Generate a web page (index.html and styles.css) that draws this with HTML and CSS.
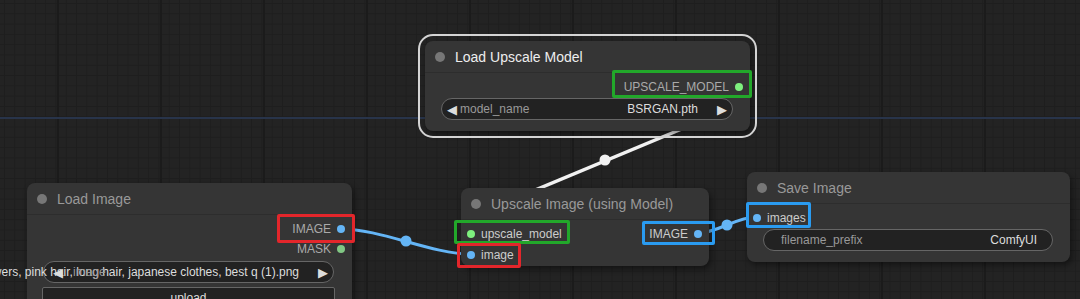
FILE: index.html
```html
<!DOCTYPE html>
<html lang="en">
<head>
    <meta charset="UTF-8">
    <meta name="viewport" content="width=device-width, initial-scale=1.0">
    <title>Upscale Workflow</title>
    <link rel="stylesheet" href="styles.css">
</head>
<body>

    <div class="canvas">
        <div class="guide"></div>

        <!-- Links between nodes -->
        <svg class="links" width="1080" height="299" viewBox="0 0 1080 299">
            <line x1="480" y1="213" x2="720" y2="113" stroke="#f2f2f2" stroke-width="3.5"/>
            <circle cx="605" cy="160" r="5.5" fill="#f2f2f2"/>
            <path d="M341 229 C 381 229, 431 254, 471 254" stroke="#64b5f6" stroke-width="3" fill="none"/>
            <circle cx="406" cy="241" r="5.5" fill="#64b5f6"/>
            <path d="M698 233 C 718 233, 736 217, 756 217" stroke="#64b5f6" stroke-width="3" fill="none"/>
            <circle cx="727" cy="225" r="5.5" fill="#64b5f6"/>
        </svg>

        <!-- Load Upscale Model -->
        <div class="node node-model selected">
            <div class="node-title"><span class="title-dot"></span>Load Upscale Model</div>
            <div class="node-body">
                <div class="slots">
                    <div class="slot-col"></div>
                    <div class="slot-col outputs">
                        <div class="slot out">UPSCALE_MODEL<span class="dot green"></span></div>
                    </div>
                </div>
                <div class="widget combo">
                    <span class="arrow">◀</span>
                    <span class="label">model_name</span>
                    <span class="value">BSRGAN.pth</span>
                    <span class="arrow right">▶</span>
                </div>
            </div>
        </div>

        <!-- Load Image -->
        <div class="node node-image">
            <div class="node-title"><span class="title-dot"></span>Load Image</div>
            <div class="node-body">
                <div class="slots">
                    <div class="slot-col"></div>
                    <div class="slot-col outputs">
                        <div class="slot out">IMAGE<span class="dot blue"></span></div>
                        <div class="slot out">MASK<span class="dot mask"></span></div>
                    </div>
                </div>
                <div class="widget combo overflow">
                    <span class="arrow">◀</span>
                    <span class="label">image</span>
                    <span class="value">1girl, cherry blossoms, flowers, pink hair, long hair, japanese clothes, best q (1).png</span>
                    <span class="arrow right">▶</span>
                </div>
                <div class="button">upload</div>
            </div>
        </div>

        <!-- Upscale Image (using Model) -->
        <div class="node node-upscale">
            <div class="node-title"><span class="title-dot"></span>Upscale Image (using Model)</div>
            <div class="node-body">
                <div class="slots">
                    <div class="slot-col">
                        <div class="slot in bright"><span class="dot green"></span>upscale_model</div>
                        <div class="slot in bright"><span class="dot blue"></span>image</div>
                    </div>
                    <div class="slot-col outputs">
                        <div class="slot out bright">IMAGE<span class="dot blue"></span></div>
                    </div>
                </div>
            </div>
        </div>

        <!-- Save Image -->
        <div class="node node-save">
            <div class="node-title"><span class="title-dot"></span>Save Image</div>
            <div class="node-body">
                <div class="slots">
                    <div class="slot-col">
                        <div class="slot in bright"><span class="dot blue"></span>images</div>
                    </div>
                </div>
                <div class="widget text">
                    <span class="label">filename_prefix</span>
                    <span class="value">ComfyUI</span>
                </div>
            </div>
        </div>

        <!-- Highlight marks -->
        <div class="mark green-mark mark-model-out"></div>
        <div class="mark red-mark mark-image-out"></div>
        <div class="mark green-mark mark-model-in"></div>
        <div class="mark red-mark mark-image-in"></div>
        <div class="mark blue-mark mark-upscale-out"></div>
        <div class="mark blue-mark mark-save-in"></div>
    </div>

</body>
</html>
```

FILE: styles.css
```css
body {
    margin: 0;
    background: #222;
}

/* Graph Canvas */
.canvas {
    position: relative;
    width: 1080px;
    height: 299px;
    overflow: hidden;
    font-family: "Liberation Sans", Arial, "DejaVu Sans", sans-serif;
    background-color: #232323;
    background-image:
        linear-gradient(90deg, #1b1b1b 2px, transparent 2px),
        linear-gradient(90deg, #1e1e1e 1px, transparent 1px),
        linear-gradient(#1e1e1e 1px, transparent 1px);
    background-size: 103px 103px, 10.3px 10.3px, 10.3px 10.3px;
    background-position: 57px 0, 4px 0, 0 3px;
}

.guide {
    position: absolute;
    left: 0;
    right: 0;
    top: 117px;
    height: 2px;
    background: #28344a;
}

.links {
    position: absolute;
    left: 0;
    top: 0;
}

/* Nodes */
.node {
    position: absolute;
    background: #353535;
    border-radius: 8px;
    box-shadow: 2px 3px 6px rgba(0, 0, 0, 0.45);
}

.node-model {
    left: 425px;
    top: 41px;
    width: 325px;
    height: 90px;
}

.node-model::before {
    content: "";
    position: absolute;
    inset: -7px;
    border: 2px solid #d4d4d4;
    border-radius: 15px;
}

.node-image {
    left: 27px;
    top: 183px;
    width: 325px;
    height: 140px;
}

.node-upscale {
    left: 461px;
    top: 188px;
    width: 248px;
    height: 78px;
}

.node-save {
    left: 747px;
    top: 172px;
    width: 323px;
    height: 90px;
}

.node-title {
    height: 31px;
    display: flex;
    align-items: center;
    gap: 10px;
    padding-left: 10px;
    font-size: 14px;
    color: #999;
    border-bottom: 1px solid #2d2d2d;
}

.selected .node-title {
    color: #eee;
}

.title-dot {
    width: 10px;
    height: 10px;
    border-radius: 50%;
    background: #777;
}

.node-body {
    display: flex;
    flex-direction: column;
    padding-top: 4px;
}

.node-upscale .node-body {
    padding-top: 3px;
}

/* Slots */
.slots {
    display: flex;
    justify-content: space-between;
}

.slot-col {
    display: flex;
    flex-direction: column;
}

.slot-col.outputs {
    align-items: flex-end;
}

.slot {
    height: 20px;
    display: flex;
    align-items: center;
    gap: 6px;
    font-size: 12px;
    color: #aaa;
}

.node-upscale .slot {
    height: 21px;
}

.slot.bright {
    color: #ccc;
}

.slot.in {
    padding-left: 6px;
}

.slot.out {
    padding-right: 7px;
}

.dot {
    width: 8px;
    height: 8px;
    border-radius: 50%;
}

.dot.green {
    background: #7ef07e;
}

.dot.blue {
    background: #64b5f6;
}

.dot.mask {
    background: #81c784;
}

/* Widgets */
.widget {
    height: 20px;
    margin: 1px 17px 0 16px;
    display: flex;
    align-items: center;
    background: #222;
    border: 1px solid #666;
    border-radius: 11px;
    font-size: 12px;
    color: #999;
    white-space: nowrap;
}

.widget.combo {
    padding: 0 5px 0 5px;
}

.widget .arrow {
    color: #ddd;
    font-size: 13px;
    font-family: "DejaVu Sans", sans-serif;
}

.widget .label {
    margin-left: 3px;
}

.widget .value {
    flex: 1;
    text-align: right;
    color: #ddd;
    margin-right: 19px;
}

.widget .arrow.right {
    margin-left: auto;
}

.widget.overflow {
    justify-content: flex-end;
    position: relative;
    margin-top: 2px;
    margin-right: 18px;
}

.widget.overflow .arrow:first-child {
    position: absolute;
    left: 9px;
}

.widget.overflow .label {
    position: absolute;
    left: 26px;
}

.widget.overflow .value {
    flex: none;
}

.widget.overflow .arrow.right {
    margin-left: 0;
}

.widget.text {
    padding: 0 15px 0 14px;
    justify-content: space-between;
}

.widget.text .value {
    flex: none;
    margin-right: 0;
}

.button {
    height: 20px;
    margin: 4px 17px 0 15px;
    background: #222;
    border: 1px solid #666;
    border-radius: 2px;
    font-size: 12px;
    color: #ddd;
    text-align: center;
    line-height: 20px;
}

/* Highlight Marks */
.mark {
    position: absolute;
    border: 3px solid;
    border-radius: 2px;
    box-sizing: border-box;
}

.red-mark {
    border-color: #e3262b;
}

.green-mark {
    border-color: #22a82a;
}

.blue-mark {
    border-color: #2a9bf0;
}

.mark-model-out {
    left: 612px;
    top: 70px;
    width: 140px;
    height: 28px;
}

.mark-image-out {
    left: 277px;
    top: 214px;
    width: 78px;
    height: 29px;
}

.mark-model-in {
    left: 454px;
    top: 220px;
    width: 116px;
    height: 24px;
}

.mark-image-in {
    left: 457px;
    top: 243px;
    width: 64px;
    height: 25px;
}

.mark-upscale-out {
    left: 642px;
    top: 221px;
    width: 73px;
    height: 24px;
}

.mark-save-in {
    left: 746px;
    top: 202px;
    width: 65px;
    height: 26px;
}
```
